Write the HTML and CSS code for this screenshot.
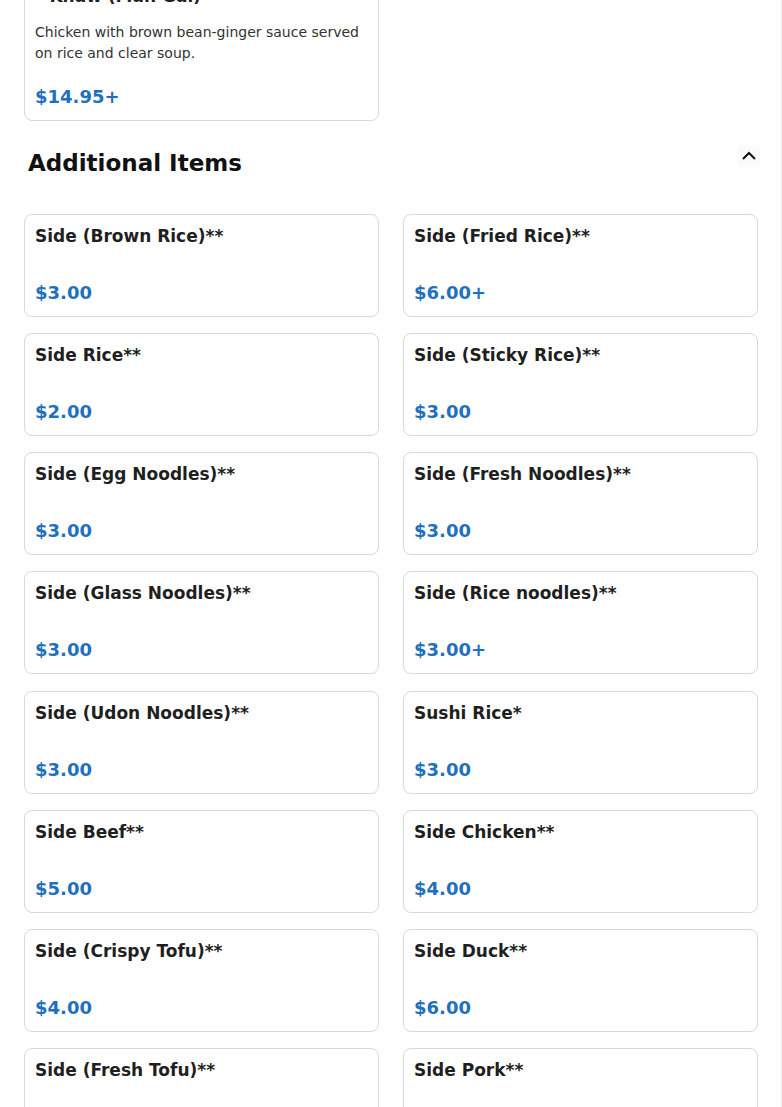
FILE: index.html
```html
<!DOCTYPE html>
<html lang="en">
<head>
<meta charset="utf-8">
<title>Menu</title>
<link rel="stylesheet" href="styles.css">
</head>
<body>
<div class="page">
  <section class="section section-prev">
    <div class="grid">
      <div class="card">
        <div class="card-title">Khao Man Gai (Chicken Rice)<br>– Khaw (Man Gai)</div>
        <div class="card-desc">Chicken with brown bean-ginger sauce served on rice and clear soup.</div>
        <div class="card-price">$14.95+</div>
      </div>
    </div>
  </section>

  <section class="section">
    <div class="section-head">
      <h2 class="section-title">Additional Items</h2>
      <button class="toggle" aria-label="Collapse">
        <svg width="14" height="10" viewBox="0 0 14 10"><polyline points="1,8 7,2 13,8" fill="none" stroke="#111" stroke-width="2"/></svg>
      </button>
    </div>
    <div class="grid">
      <div class="card"><div class="card-title">Side (Brown Rice)**</div><div class="card-price">$3.00</div></div>
      <div class="card"><div class="card-title">Side (Fried Rice)**</div><div class="card-price">$6.00+</div></div>
      <div class="card"><div class="card-title">Side Rice**</div><div class="card-price">$2.00</div></div>
      <div class="card"><div class="card-title">Side (Sticky Rice)**</div><div class="card-price">$3.00</div></div>
      <div class="card"><div class="card-title">Side (Egg Noodles)**</div><div class="card-price">$3.00</div></div>
      <div class="card"><div class="card-title">Side (Fresh Noodles)**</div><div class="card-price">$3.00</div></div>
      <div class="card"><div class="card-title">Side (Glass Noodles)**</div><div class="card-price">$3.00</div></div>
      <div class="card"><div class="card-title">Side (Rice noodles)**</div><div class="card-price">$3.00+</div></div>
      <div class="card"><div class="card-title">Side (Udon Noodles)**</div><div class="card-price">$3.00</div></div>
      <div class="card"><div class="card-title">Sushi Rice*</div><div class="card-price">$3.00</div></div>
      <div class="card"><div class="card-title">Side Beef**</div><div class="card-price">$5.00</div></div>
      <div class="card"><div class="card-title">Side Chicken**</div><div class="card-price">$4.00</div></div>
      <div class="card"><div class="card-title">Side (Crispy Tofu)**</div><div class="card-price">$4.00</div></div>
      <div class="card"><div class="card-title">Side Duck**</div><div class="card-price">$6.00</div></div>
      <div class="card"><div class="card-title">Side (Fresh Tofu)**</div><div class="card-price">$3.00</div></div>
      <div class="card"><div class="card-title">Side Pork**</div><div class="card-price">$5.00</div></div>
    </div>
  </section>
</div>
</body>
</html>
```

FILE: styles.css
```css
* { box-sizing: border-box; }
html, body { margin: 0; padding: 0; background: #fff; }
body {
  font-family: "DejaVu Sans", sans-serif;
  color: #212121;
  overflow: hidden;
}
.page {
  border-right: 1px solid #eeeeee;
  padding: 0 23px 40px 24px;
  margin-top: -49px;
}
.section-prev { margin-bottom: 24px; }
.grid {
  display: grid;
  grid-template-columns: 1fr 1fr;
  column-gap: 24px;
  row-gap: 16.14px;
}
.card {
  border: 1px solid #d9d9d9;
  border-radius: 8px;
  padding: 10px 10px 10px;
  background: #fff;
  display: flex;
  flex-direction: column;
}
.card-title {
  font-size: 17px;
  font-weight: 700;
  line-height: 23px;
  color: #1f1f1f;
}
.card-desc {
  font-size: 14px;
  line-height: 21px;
  color: #333;
  margin-top: 14px;
}
.card-price {
  font-size: 18px;
  font-weight: 700;
  line-height: 27px;
  color: #1f70bd;
  margin-top: 31px;
}
.card-desc + .card-price { margin-top: 19px; }
.section-head {
  display: flex;
  justify-content: space-between;
  align-items: flex-start;
  padding-left: 4px;
  margin-bottom: 33px;
}
.section-title {
  margin: 0;
  font-size: 23px;
  font-weight: 700;
  line-height: 36px;
  color: #111;
}
.toggle {
  width: 22px;
  height: 22px;
  margin-top: 0;
  margin-right: -2px;
  border: 0;
  padding: 0;
  background: #fbfbfb;
  border-radius: 4px;
  display: flex;
  align-items: center;
  justify-content: center;
}
```
